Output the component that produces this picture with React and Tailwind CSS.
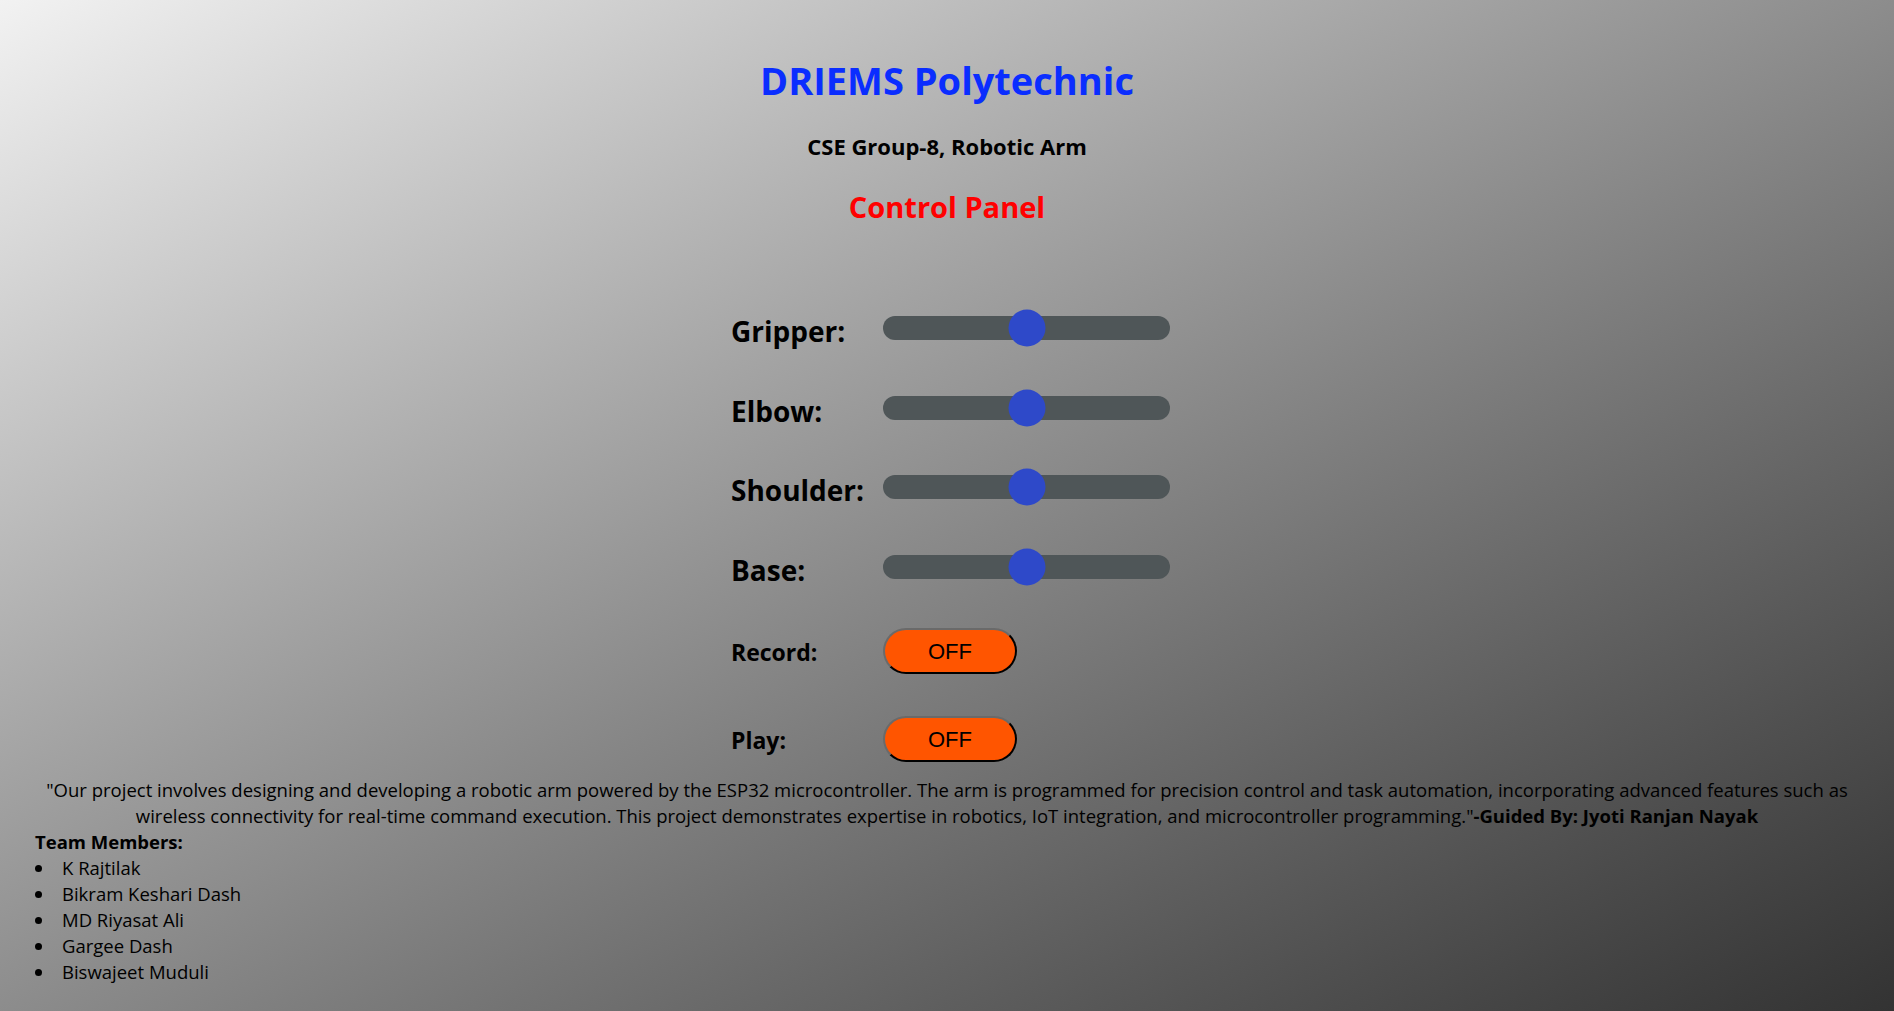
import React from "react";

const sliders = ["Gripper:", "Elbow:", "Shoulder:", "Base:"];
const toggles = ["Record:", "Play:"];
const team = [
  "K Rajtilak",
  "Bikram Keshari Dash",
  "MD Riyasat Ali",
  "Gargee Dash",
  "Biswajeet Muduli",
];

const App = () => {
  return (
    <div className="h-screen overflow-hidden bg-linear-to-br from-[#f2f2f2] to-[#333333] text-black font-['Open_Sans',sans-serif]">
      <div className="flex flex-col items-center pt-[55px]">
        <h1 className="h-[50px] leading-[50px] text-[38px] font-bold text-[#0a2dff]">
          DRIEMS Polytechnic
        </h1>
        <h3 className="mt-[26px] h-[30px] leading-[30px] text-[22px] font-bold">
          CSE Group-8, Robotic Arm
        </h3>
        <h2 className="mt-[27px] h-[38px] leading-[38px] text-[29px] font-bold text-[#ff0000]">
          Control Panel
        </h2>

        <div className="mt-[82px] ml-[8px] w-[440px] flex flex-col">
          <div className="flex flex-col gap-[39.5px]">
            {sliders.map((s) => (
              <div key={s} className="flex items-center h-[40px]">
                <span className="w-[152px] mt-[6px] text-[28px] font-bold">{s}</span>
                <div className="relative w-[287px] h-[24px] rounded-full bg-[#4f5658]">
                  <div className="absolute left-1/2 top-1/2 -translate-x-1/2 -translate-y-1/2 w-[37px] h-[37px] rounded-full bg-[#2e49c9]" />
                </div>
              </div>
            ))}
          </div>
          <div className="mt-[41.5px] flex flex-col gap-[42px]">
            {toggles.map((t) => (
              <div key={t} className="flex items-center h-[46px]">
                <span className="w-[152px] mt-[2px] text-[23px] font-bold">{t}</span>
                <button className="w-[134px] h-[46px] rounded-full bg-[#ff5500] border-2 border-t-[#6a6a6a] border-l-[#6a6a6a] border-b-black border-r-black font-['Liberation_Sans',Arial,sans-serif] text-[22px] text-black">
                  OFF
                </button>
              </div>
            ))}
          </div>
        </div>
      </div>

      <div className="mt-[15px] px-[35px] text-[18.5px] leading-[26px]">
        <p className="text-center">
          "Our project involves designing and developing a robotic arm powered by the ESP32 microcontroller. The arm is programmed for precision control and task automation, incorporating advanced features such as wireless connectivity for real-time command execution. This project demonstrates expertise in robotics, IoT integration, and microcontroller programming."
          <b>-Guided By: Jyoti Ranjan Nayak</b>
        </p>
        <p className="font-bold">Team Members:</p>
        <ul>
          {team.map((m) => (
            <li key={m} className="flex items-center">
              <span className="w-[27px] flex items-center">
                <span className="w-[7px] h-[7px] rounded-full bg-black" />
              </span>
              <span>{m}</span>
            </li>
          ))}
        </ul>
      </div>
    </div>
  );
};

export default App;
